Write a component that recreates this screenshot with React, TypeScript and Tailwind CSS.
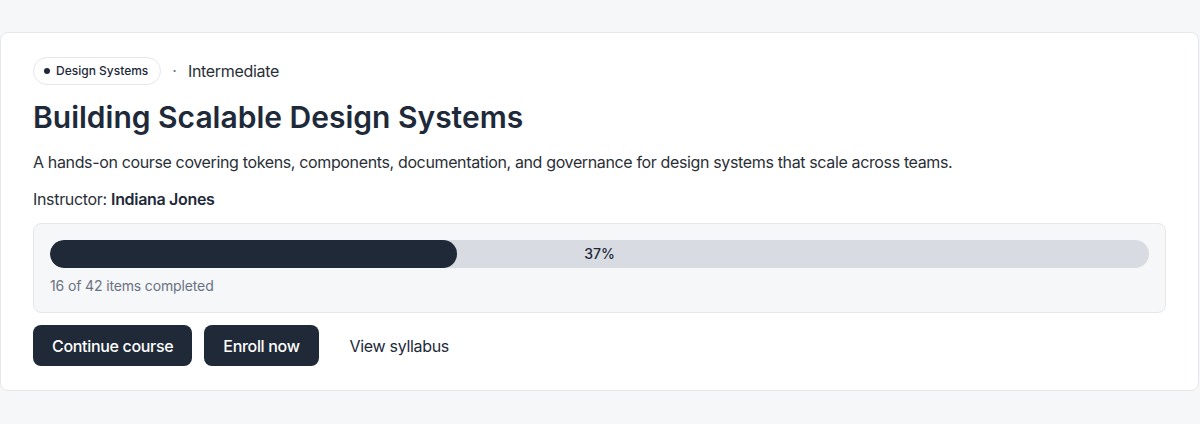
import React from "react";

const progress = { done: 16, total: 42, pct: 37 };

export default function App() {
  return (
    <div className="min-h-screen bg-[#f6f7f9] pt-8 font-['Inter',sans-serif]">
      <div className="mr-px rounded-lg border border-gray-200 bg-white px-8 py-6">
        <div className="flex items-center gap-[11px]">
          <span className="inline-flex h-7 items-center gap-1.5 rounded-full border border-gray-200 bg-white pl-2.5 pr-3 text-xs font-medium text-gray-800">
            <span className="h-1.5 w-1.5 rounded-full bg-gray-800" />
            Design Systems
          </span>
          <span className="text-gray-500">·</span>
          <span className="text-base tracking-[-0.02em] text-[#2a2f37]">Intermediate</span>
        </div>

        <h1 className="mt-[14px] text-3xl font-semibold text-gray-800">
          Building Scalable Design Systems
        </h1>

        <p className="mt-[15px] text-base tracking-[-0.36px] text-[#2a2f37]">
          A hands-on course covering tokens, components, documentation, and
          governance for design systems that scale across teams.
        </p>

        <p className="mt-[13px] text-base tracking-[-0.02em] text-[#2a2f37]">
          Instructor: <span className="font-semibold text-gray-800">Indiana Jones</span>
        </p>

        <div className="mt-3 rounded-lg border border-gray-200 bg-[#f6f7f9] p-4">
          <div className="relative h-7 overflow-hidden rounded-full bg-[#d8dbe1]">
            <div
              className="h-full rounded-full bg-[#1f2937]"
              style={{ width: `${progress.pct}%` }}
            />
            <span className="absolute inset-0 flex items-center justify-center text-sm font-medium text-gray-800">
              {progress.pct}%
            </span>
          </div>
          <p className="mt-2 text-sm tracking-[-0.01em] text-gray-500">
            {progress.done} of {progress.total} items completed
          </p>
        </div>

        <div className="mt-3 flex items-center gap-3">
          <button className="h-[41px] rounded-lg bg-[#1f2937] px-[19px] text-base font-medium tracking-[-0.02em] text-white">
            Continue course
          </button>
          <button className="h-[41px] rounded-lg bg-[#1f2937] px-[19px] text-base font-medium tracking-[-0.02em] text-white">
            Enroll now
          </button>
          <button className="h-[41px] rounded-lg px-[19px] text-base tracking-[-0.02em] text-gray-800">
            View syllabus
          </button>
        </div>
      </div>
    </div>
  );
}
